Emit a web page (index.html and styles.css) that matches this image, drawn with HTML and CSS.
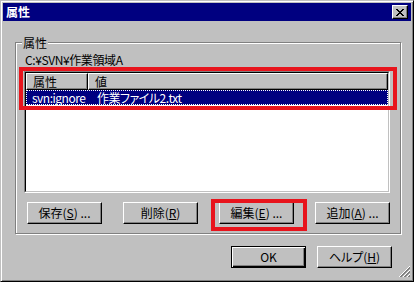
FILE: index.html
```html
<!DOCTYPE html>
<html>
<head>
    <meta charset="utf-8">
    <title>属性</title>
    <link rel="stylesheet" href="styles.css">
</head>
<body>
    <div id="window">
        <div class="titlebar">
            <span class="title">属性</span>
            <button class="close-btn">
                <svg width="8" height="7" viewBox="0 0 8 7" shape-rendering="crispEdges">
                    <path d="M0 0h2v1H0zM6 0h2v1H6zM1 1h2v1H1zM5 1h2v1H5zM2 2h4v1H2zM3 3h2v1H3zM2 4h4v1H2zM1 5h2v1H1zM5 5h2v1H5zM0 6h2v1H0zM6 6h2v1H6z" fill="#000"/>
                </svg>
            </button>
        </div>

        <div class="content">
            <fieldset class="group">
                <legend>属性</legend>
                <div class="group-body">
                    <div class="path">C:¥SVN¥作業領域A</div>

                    <div class="listview">
                        <div class="list-inner">
                            <div class="list-header">
                                <div class="col col-name">属性</div>
                                <div class="col col-value">値</div>
                            </div>
                            <div class="list-row selected">
                                <div class="cell cell-name">svn:ignore</div>
                                <div class="cell cell-value">作業ファイル2.txt</div>
                            </div>
                        </div>
                    </div>

                    <div class="button-row">
                        <button class="btn">保存(<u>S</u>) ...</button>
                        <button class="btn">削除(<u>R</u>)</button>
                        <button class="btn">編集(<u>E</u>) ...</button>
                        <button class="btn">追加(<u>A</u>) ...</button>
                    </div>
                </div>
            </fieldset>

            <div class="footer">
                <button class="btn default">OK</button>
                <button class="btn">ヘルプ(<u>H</u>)</button>
            </div>
        </div>

        <!-- annotation marks -->
        <div class="mark mark-list"></div>
        <div class="mark mark-edit"></div>

        <svg class="grip" width="12" height="12" viewBox="0 0 12 12" shape-rendering="crispEdges">
            <line x1="0.5" y1="11.5" x2="11.5" y2="0.5" stroke="#fff"/>
            <line x1="1.5" y1="11.5" x2="11.5" y2="1.5" stroke="#808080"/>
            <line x1="2.5" y1="11.5" x2="11.5" y2="2.5" stroke="#808080"/>
            <line x1="4.5" y1="11.5" x2="11.5" y2="4.5" stroke="#fff"/>
            <line x1="5.5" y1="11.5" x2="11.5" y2="5.5" stroke="#808080"/>
            <line x1="6.5" y1="11.5" x2="11.5" y2="6.5" stroke="#808080"/>
            <line x1="8.5" y1="11.5" x2="11.5" y2="8.5" stroke="#fff"/>
            <line x1="9.5" y1="11.5" x2="11.5" y2="9.5" stroke="#808080"/>
            <line x1="10.5" y1="11.5" x2="11.5" y2="10.5" stroke="#808080"/>
        </svg>
    </div>
</body>
</html>
```

FILE: styles.css
```css
* {
    box-sizing: border-box;
}

body {
    margin: 0;
    background-color: #c0c0c0;
    font-family: "Noto Sans CJK JP", sans-serif;
    font-size: 12px;
    font-feature-settings: "palt";
    color: #000;
}

#window {
    position: relative;
    width: 414px;
    height: 282px;
    display: flex;
    flex-direction: column;
    padding: 2px;
    background-color: #c0c0c0;
    border: 1px solid;
    border-color: #c0c0c0 #000 #000 #c0c0c0;
    box-shadow: inset 1px 1px #fff, inset -1px -1px #808080;
}

.titlebar {
    height: 18px;
    display: flex;
    align-items: center;
    justify-content: space-between;
    padding: 0 3px 0 3px;
    background-color: #000080;
    color: #fff;
}

.title {
    font-weight: bold;
    line-height: 18px;
}

.close-btn {
    width: 16px;
    height: 14px;
    padding: 0;
    display: flex;
    align-items: center;
    justify-content: center;
    background-color: #c0c0c0;
    border: 1px solid;
    border-color: #fff #000 #000 #fff;
    box-shadow: inset -1px -1px #808080;
}

.content {
    flex: 1;
    padding: 15px 10px 0 12px;
}

.group {
    margin: 0;
    padding: 0;
    min-width: 0;
    border: 1px solid #808080;
    box-shadow: inset 1px 1px #fff, 1px 1px #fff;
}

.group legend {
    margin-left: 6px;
    padding: 0 1px;
    line-height: 13px;
    background-color: #c0c0c0;
}

.group-body {
    padding: 4px 9px 9px 8px;
}

.path {
    padding-left: 1px;
    line-height: 14px;
    letter-spacing: -0.4px;
}

.listview {
    margin-top: 4px;
    width: 366px;
    height: 122px;
    border: 1px solid;
    border-color: #808080 #fff #fff #808080;
}

.list-inner {
    height: 100%;
    background-color: #fff;
    border: 1px solid;
    border-color: #000 #c0c0c0 #c0c0c0 #000;
}

.list-header {
    display: flex;
    height: 17px;
}

.col {
    padding-left: 6px;
    line-height: 15px;
    background-color: #c0c0c0;
    border: 1px solid;
    border-color: #fff #000 #000 #fff;
    box-shadow: inset -1px -1px #808080;
}

.col-name {
    width: 62px;
}

.col-value {
    flex: 1;
}

.list-row {
    display: flex;
    height: 15px;
    line-height: 15px;
}

.list-row.selected {
    background-color: #000080;
    color: #fff;
    outline: 1px dotted #fff;
    outline-offset: -1px;
}

.cell {
    letter-spacing: -0.5px;
}

.cell-name {
    width: 62px;
    padding-left: 6px;
}

.cell-value {
    padding-left: 9px;
}

.button-row {
    display: flex;
    gap: 21px;
    margin-top: 9px;
    padding-left: 3px;
}

.btn {
    width: 75px;
    height: 22px;
    padding: 0;
    font-family: inherit;
    font-size: 12px;
    font-feature-settings: "palt";
    line-height: 18px;
    color: #000;
    background-color: #c0c0c0;
    border: 1px solid;
    border-color: #fff #000 #000 #fff;
    box-shadow: inset -1px -1px #808080;
}

.btn.default {
    border-color: #000;
    box-shadow: inset 1px 1px #fff, inset -1px -1px #000, inset -2px -2px #808080;
}

.footer {
    display: flex;
    justify-content: flex-end;
    gap: 11px;
    margin-top: 12px;
    padding-right: 9px;
}

.mark {
    position: absolute;
    border: 4px solid #e8141c;
}

.mark-list {
    left: 18px;
    top: 66px;
    width: 378px;
    height: 43px;
}

.mark-edit {
    left: 210px;
    top: 198px;
    width: 96px;
    height: 32px;
}

.grip {
    position: absolute;
    right: 3px;
    bottom: 3px;
}
```
